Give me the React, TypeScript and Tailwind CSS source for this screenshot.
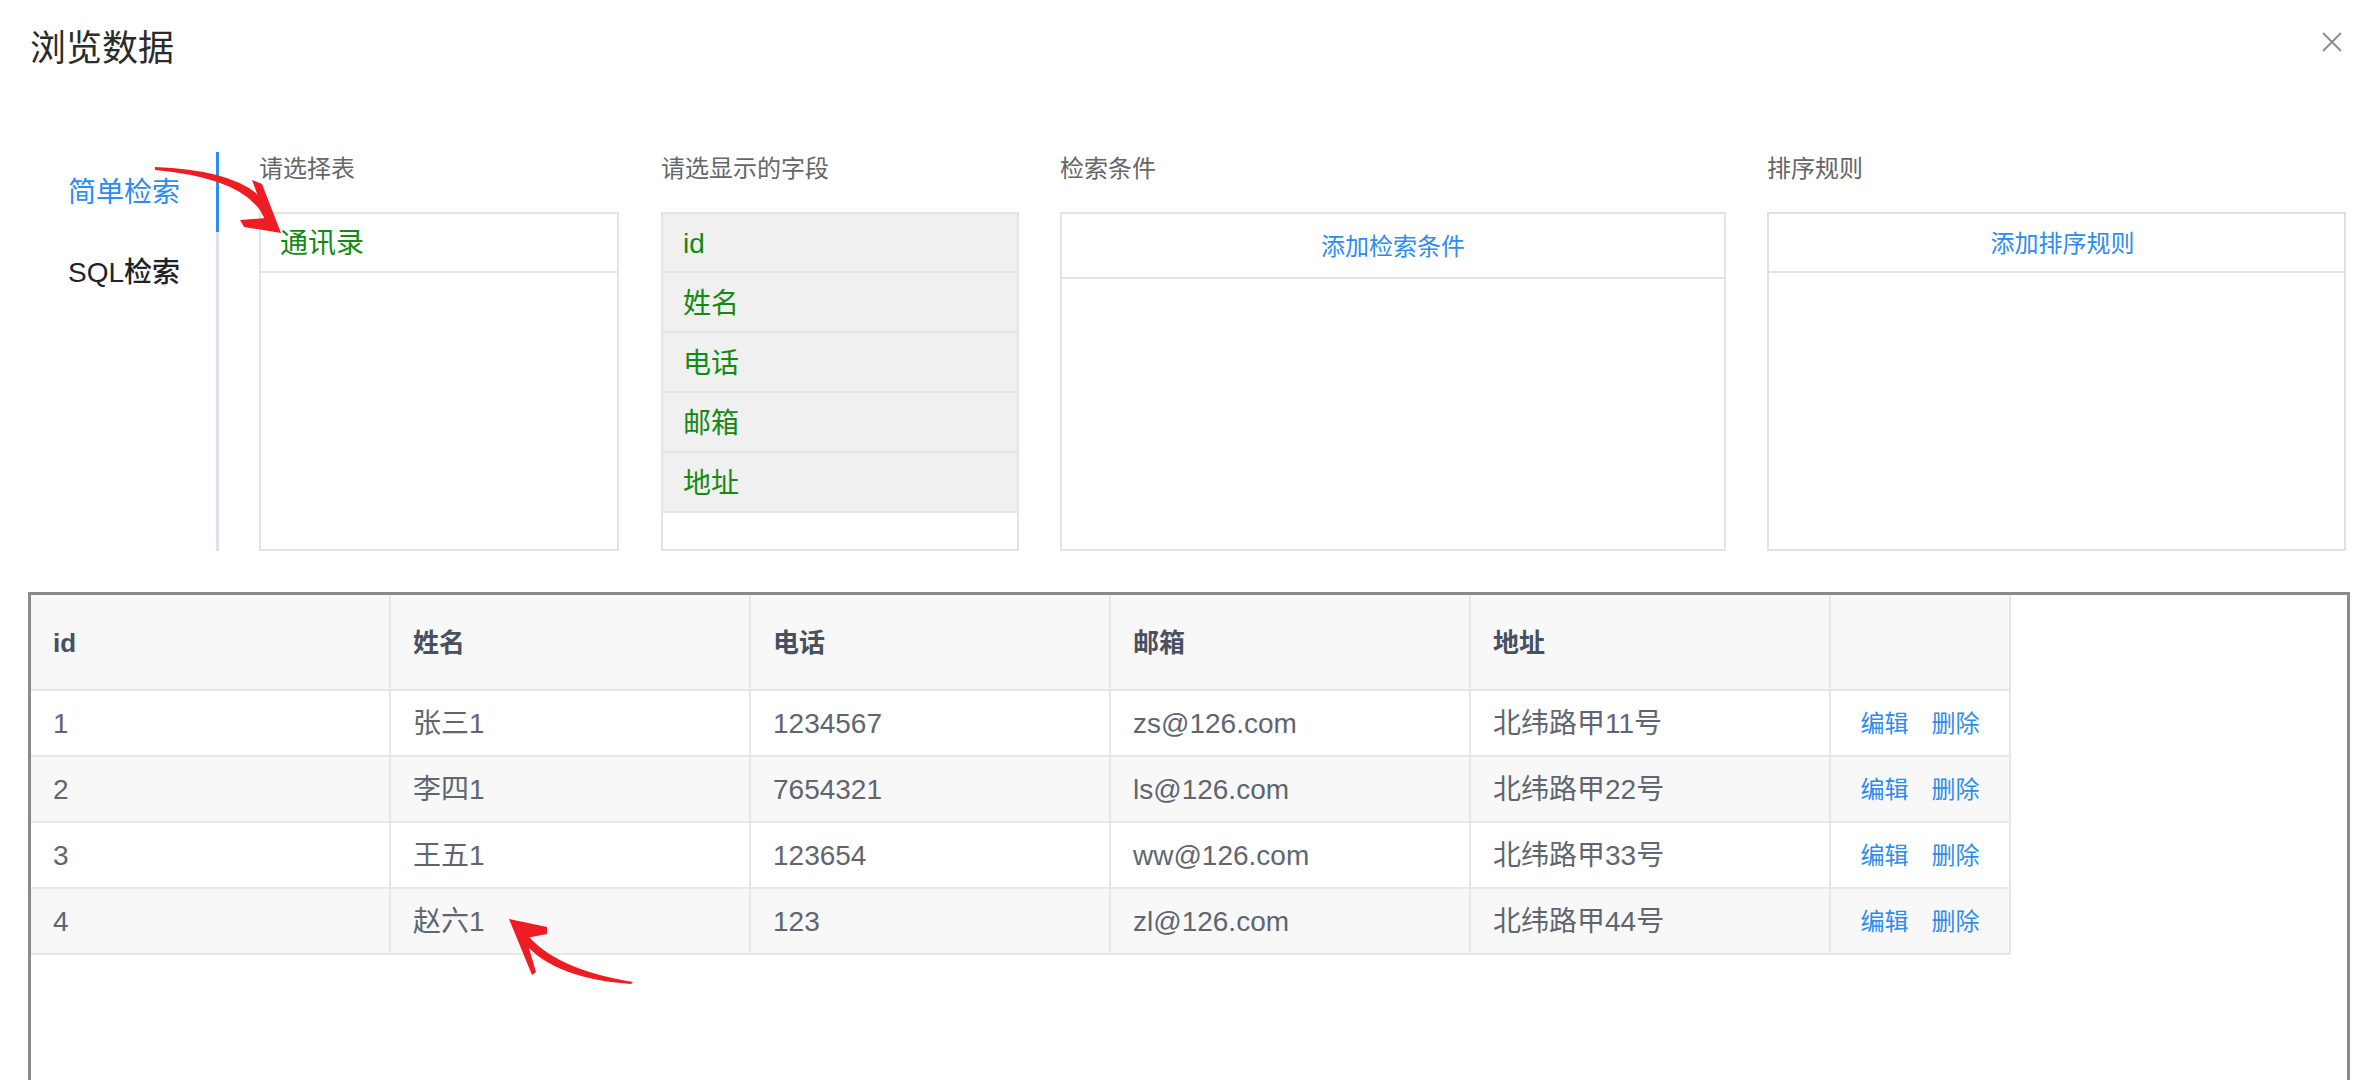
import React from "react";

const rows = [
  ["1", "张三1", "1234567", "zs@126.com", "北纬路甲11号"],
  ["2", "李四1", "7654321", "ls@126.com", "北纬路甲22号"],
  ["3", "王五1", "123654", "ww@126.com", "北纬路甲33号"],
  ["4", "赵六1", "123", "zl@126.com", "北纬路甲44号"],
];

const headers = ["id", "姓名", "电话", "邮箱", "地址"];
const fields = ["id", "姓名", "电话", "邮箱", "地址"];

export default function App() {
  return (
    <div className="relative w-[2378px] h-[1080px] overflow-hidden bg-white font-['Liberation_Sans','Noto_Sans_CJK_SC',sans-serif]">
      {/* Header */}
      <div className="flex items-start justify-between pt-[29px] pl-[30px] pr-[36px]">
        <div className="text-[36px] leading-[40px] text-[#2b2b2b]">浏览数据</div>
        <button className="mt-[3px] w-[20px] h-[20px]">
          <svg width="20" height="20" viewBox="0 0 20 20">
            <path d="M1 1 L19 19 M19 1 L1 19" stroke="#8e8e93" strokeWidth="2" fill="none" />
          </svg>
        </button>
      </div>

      {/* Body */}
      <div className="mt-[83px] flex">
        {/* Tabs */}
        <div className="flex flex-col w-[219px] h-[399px]">
          <div className="h-[80px] flex items-center pt-[2px] pl-[68px] border-r-[3px] border-[#2d8cf0] text-[28px] text-[#2d8cf0]">
            简单检索
          </div>
          <div className="h-[80px] flex items-center pt-[2px] pl-[68px] border-r-[3px] border-[#dde2ea] text-[28px] font-medium text-[#1f2329]">
            SQL检索
          </div>
          <div className="flex-1 border-r-[3px] border-[#dde2ea]" />
        </div>

        {/* Column 1 */}
        <div className="ml-[40px] w-[360px] flex flex-col">
          <div className="h-[32px] leading-[32px] pt-[1px] text-[24px] text-[#666]">请选择表</div>
          <div className="mt-[28px] h-[339px] border-2 border-[#dfe5ee]">
            <div className="h-[59px] flex items-center pt-[3px] pl-[19px] border-b-2 border-[#dfe5ee] text-[28px] text-[#138a13]">
              通讯录
            </div>
          </div>
        </div>

        {/* Column 2 */}
        <div className="ml-[42px] w-[358px] flex flex-col">
          <div className="h-[32px] leading-[32px] pt-[1px] text-[24px] text-[#666]">请选显示的字段</div>
          <div className="mt-[28px] h-[339px] border-2 border-[#e4e4e4]">
            {fields.map((f, i) => (
              <div
                key={f}
                className={`${i === 0 ? "h-[59px]" : "h-[60px]"} flex items-center pt-[3px] pl-[20px] bg-[#f0f0f0] border-b-2 border-[#e4e4e4] text-[28px] text-[#138a13]`}
              >
                {f}
              </div>
            ))}
          </div>
        </div>

        {/* Column 3 */}
        <div className="ml-[41px] w-[666px] flex flex-col">
          <div className="h-[32px] leading-[32px] pt-[1px] text-[24px] text-[#666]">检索条件</div>
          <div className="mt-[28px] h-[339px] border-2 border-[#dfe5ee]">
            <div className="h-[65px] flex items-center justify-center pt-[2px] border-b-2 border-[#dfe5ee] text-[24px] text-[#2d8cf0]">
              添加检索条件
            </div>
          </div>
        </div>

        {/* Column 4 */}
        <div className="ml-[41px] w-[579px] flex flex-col">
          <div className="h-[32px] leading-[32px] pt-[1px] text-[24px] text-[#666]">排序规则</div>
          <div className="mt-[28px] h-[339px] border-2 border-[#e1e1e1]">
            <div className="h-[59px] flex items-center justify-center pt-[2px] pl-[12px] border-b-2 border-[#e1e1e1] text-[24px] text-[#2d8cf0]">
              添加排序规则
            </div>
          </div>
        </div>
      </div>

      {/* Table frame */}
      <div className="mx-[28px] mt-[41px] h-[600px] border-[3px] border-[#8a8a8a]">
        <div className="w-[1980px]">
          <div className="flex h-[96px] bg-[#f8f8f9] border-b-2 border-[#e3e8ee]">
            {headers.map((h) => (
              <div
                key={h}
                className="w-[360px] flex items-center pt-[2px] pl-[22px] border-r-2 border-[#e3e8ee] text-[26px] font-bold text-[#495060]"
              >
                {h}
              </div>
            ))}
            <div className="w-[180px] border-r-2 border-[#e3e8ee]" />
          </div>
          {rows.map((r, i) => (
            <div
              key={r[0]}
              className={`flex h-[66px] border-b-2 border-[#e3e8ee] ${i % 2 === 1 ? "bg-[#f8f8f9]" : "bg-white"}`}
            >
              {r.map((c, j) => (
                <div
                  key={j}
                  className="w-[360px] flex items-center pt-[2px] pl-[22px] border-r-2 border-[#e3e8ee] text-[28px] text-[#5f6670]"
                >
                  {c}
                </div>
              ))}
              <div className="w-[180px] flex items-center justify-center pt-[2px] gap-[23px] border-r-2 border-[#e3e8ee] text-[24px] text-[#2d8cf0]">
                <span>编辑</span>
                <span>删除</span>
              </div>
            </div>
          ))}
        </div>
      </div>

      {/* Red annotation arrows */}
      <svg
        className="absolute left-0 top-0 pointer-events-none"
        width="2378"
        height="1080"
        viewBox="0 0 2378 1080"
      >
        <g fill="#ee1d23">
          <path d="M155 167 Q261 171 274 220 L266 223 Q253 179 155 170 Z" />
          <path d="M252 180 L262 184 L281 233 L244 227 L240 220 L266 218 Z" />
          <path d="M525 932 Q553 969 633 982 L631 984 Q547 978 519 936 Z" />
          <path d="M547 927 L509 919 L532 975 L536 972 L526 938 L547 934 Z" />
        </g>
      </svg>
    </div>
  );
}
